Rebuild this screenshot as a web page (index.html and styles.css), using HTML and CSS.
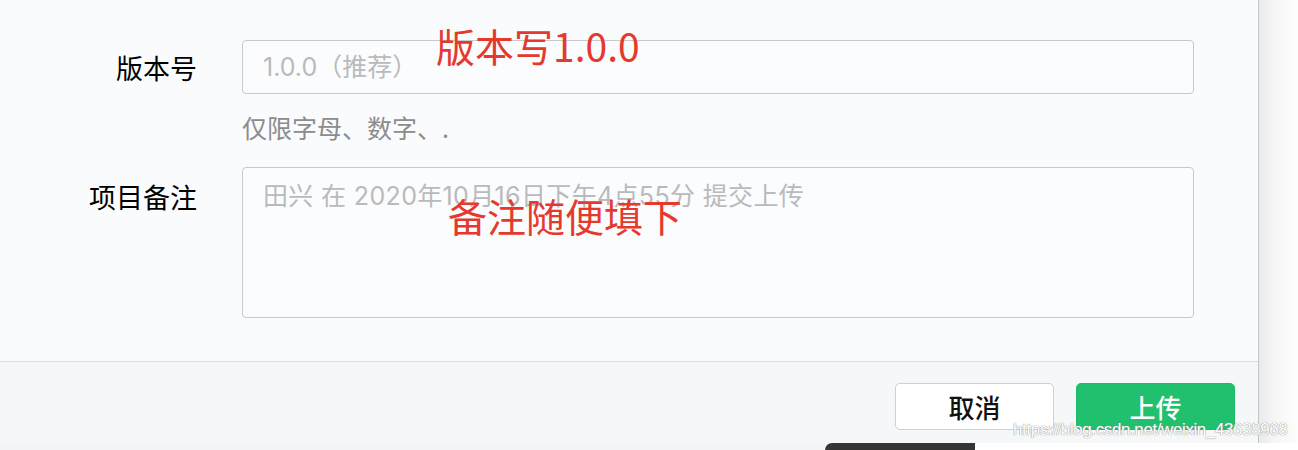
FILE: index.html
```html
<!DOCTYPE html>
<html lang="zh-CN">
<head>
<meta charset="utf-8">
<title>上传</title>
<link rel="stylesheet" href="styles.css">
</head>
<body>
<div class="page">
  <div class="main">
    <div class="dialog">
      <div class="dialog-body">
        <div class="form-row">
          <label class="label label-mid">版本号</label>
          <div class="field">
            <input class="input" type="text" placeholder="1.0.0（推荐）">
            <div class="hint">仅限字母、数字、.</div>
          </div>
        </div>
        <div class="form-row form-row-second">
          <label class="label label-top">项目备注</label>
          <div class="field">
            <textarea class="textarea" placeholder="田兴 在 2020年10月16日下午4点55分 提交上传"></textarea>
          </div>
        </div>
        <div class="note note-version">版本写1.0.0</div>
        <div class="note note-remark">备注随便填下</div>
      </div>
      <div class="dialog-footer">
        <button class="btn btn-cancel">取消</button>
        <button class="btn btn-primary">上传</button>
      </div>
    </div>
    <div class="side"></div>
  </div>
  <div class="strip">
    <div class="strip-gap"></div>
    <div class="strip-dark"></div>
    <div class="strip-light"></div>
  </div>
  <div class="watermark">https://blog.csdn.net/weixin_43638968</div>
</div>
</body>
</html>
```
FILE: styles.css
```css
* { box-sizing: border-box; }
html, body { margin: 0; padding: 0; }
body {
  width: 1298px;
  height: 450px;
  overflow: hidden;
  background: #ffffff;
  font-family: "Noto Sans CJK SC", "Noto Sans", sans-serif;
}
.page {
  position: relative;
  display: flex;
  flex-direction: column;
  height: 450px;
}
.main {
  display: flex;
  height: 443px;
}
.dialog {
  width: 1259px;
  border-right: 1px solid #c4c5c7;
  display: flex;
  flex-direction: column;
}
.dialog-body {
  position: relative;
  height: 361px;
  background: #fafbfc;
  padding-top: 40px;
}
.form-row {
  display: grid;
  grid-template-columns: 197px 952px;
  column-gap: 45px;
  align-items: start;
}
.form-row-second { margin-top: 25px; }
.label {
  text-align: right;
  font-size: 27px;
  font-weight: 400;
  color: #000000;
}
.label-mid { height: 54px; line-height: 56px; }
.label-top { padding-top: 15px; line-height: 30px; }
.field { display: flex; flex-direction: column; }
.input, .textarea {
  display: block;
  width: 952px;
  border: 1px solid #c8c9cb;
  border-radius: 4px;
  background: #fbfcfd;
  font-family: "Inter", "Noto Sans CJK SC", "Noto Sans", sans-serif;
  font-size: 25px;
  color: #222;
  outline: none;
  margin: 0;
}
.input {
  height: 54px;
  padding: 0 20px;
}
.textarea {
  height: 151px;
  padding: 13px 20px;
  line-height: 30px;
  letter-spacing: 0.35px;
  resize: none;
}
.input::placeholder, .textarea::placeholder { color: #b9babc; }
.hint {
  margin-top: 18px;
  font-size: 25px;
  line-height: 30px;
  color: #8c8c8c;
}
.note {
  position: absolute;
  font-size: 39px;
  line-height: 39px;
  color: #e6392e;
  white-space: nowrap;
}
.note-version { left: 436px; top: 26px; }
.note-remark { left: 448px; top: 196px; }
.dialog-footer {
  flex: 1;
  border-top: 1px solid #dcdde0;
  background: #f6f7f8;
  display: flex;
  justify-content: flex-end;
  align-items: flex-start;
  gap: 22px;
  padding: 21px 23px 0 0;
}
.btn {
  width: 159px;
  height: 47px;
  border-radius: 5px;
  font-family: "Noto Sans CJK SC", "Noto Sans", sans-serif;
  font-size: 26px;
  font-weight: 500;
  padding: 0;
  line-height: 45px;
}
.btn-cancel {
  background: #ffffff;
  border: 1px solid #cfd0d2;
  color: #111;
}
.btn-primary {
  background: #20c06f;
  border: 1px solid #1db868;
  color: #ffffff;
}
.side {
  flex: 1;
  background: linear-gradient(to right, #e9eaeb 0%, #f6f6f7 40%, #fdfdfd 100%);
}
.strip {
  display: flex;
  height: 7px;
}
.strip-gap { width: 825px; background: #f3f4f5; }
.strip-dark { width: 150px; background: #353535; border-top-left-radius: 8px; }
.strip-light { flex: 1; background: #ffffff; }
.watermark {
  position: absolute;
  left: 1013px;
  top: 419px;
  font-family: "Liberation Sans", Arial, sans-serif;
  font-size: 17px;
  letter-spacing: -0.4px;
  line-height: 22px;
  color: #ffffff;
  text-shadow: 0 0 1px #8c8c8c, 0 0 1px #9a9a9a;
  white-space: nowrap;
}
```
